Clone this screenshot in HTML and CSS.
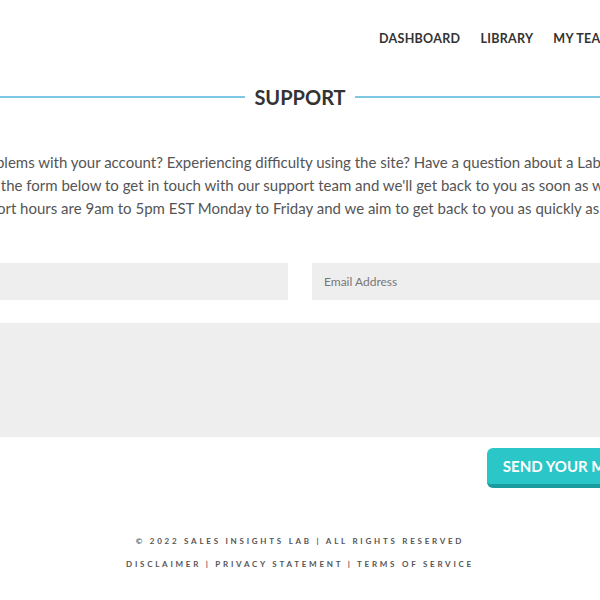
FILE: index.html
```html
<!DOCTYPE html>
<html lang="en">
<head>
    <meta charset="UTF-8">
    <meta name="viewport" content="width=device-width, initial-scale=1.0">
    <title>Support - Sales Insights Lab</title>
    <link rel="stylesheet" href="styles.css">
</head>
<body>

<div class="page">
    <div class="container">
        <header class="site-header">
            <nav class="main-nav">
                <a href="#">Dashboard</a>
                <a href="#">Library</a>
                <a href="#">My Team</a>
                <a href="#">Logout</a>
            </nav>
        </header>

        <h1 class="section-title"><span>Support</span></h1>

        <p class="intro">
            <span class="line">Having problems with your account? Experiencing difficulty using the site? Have a question about a Lab report?</span>
            <span class="line line-2">Please use the form below to get in touch with our support team and we'll get back to you as soon as we can.</span>
            <span class="line line-3">Our support hours are 9am to 5pm EST Monday to Friday and we aim to get back to you as quickly as possible.</span>
        </p>

        <form class="support-form">
            <div class="form-row">
                <input type="text" placeholder="Name">
                <input type="email" placeholder="Email Address">
            </div>
            <textarea placeholder="Message"></textarea>
            <div class="form-actions">
                <button type="button">Send Your Message</button>
            </div>
        </form>

        <footer class="site-footer">
            <p>&copy; 2022 Sales Insights Lab | All Rights Reserved</p>
            <p>Disclaimer | Privacy Statement | Terms of Service</p>
        </footer>
    </div>
</div>

</body>
</html>
```

FILE: styles.css
```css
body {
    margin: 0;
    background-color: #ffffff;
    color: #555;
    font-family: 'Lato', 'Open Sans', sans-serif;
    overflow: hidden;
}

.page {
    display: flex;
    justify-content: center;
}

.container {
    width: 752px;
    flex-shrink: 0;
}

.site-header {
    padding: 30px 0 0 455px;
    height: 40px;
}

.main-nav {
    display: flex;
    gap: 20px;
    white-space: nowrap;
}

.main-nav a {
    color: #333;
    text-decoration: none;
    text-transform: uppercase;
    font-size: 12.5px;
    font-weight: bold;
    letter-spacing: 0.3px;
    line-height: 17px;
}

.section-title {
    display: flex;
    align-items: center;
    gap: 9px;
    margin: 17px -200px 0;
    font-size: 20px;
    line-height: 20px;
    font-weight: bold;
    color: #333;
    text-transform: uppercase;
}

.section-title::before,
.section-title::after {
    content: "";
    flex: 1;
    height: 2px;
    background-color: #7ec8e6;
}

.intro {
    margin: 44px 0 0;
    font-size: 15px;
    line-height: 23px;
    white-space: nowrap;
}

.intro .line {
    display: block;
}

.intro .line-2 {
    padding-left: 4px;
}

.intro .line-3 {
    padding-left: 12px;
}

.support-form {
    margin-top: 43px;
}

.form-row {
    display: flex;
    gap: 24px;
}

.support-form input,
.support-form textarea {
    display: block;
    box-sizing: border-box;
    border: none;
    background-color: #eeeeee;
    font-family: inherit;
    font-size: 12px;
    color: #555;
    padding: 0 12px;
}

.support-form input {
    flex: 1;
    height: 37px;
}

.support-form textarea {
    width: 100%;
    height: 114px;
    margin-top: 23px;
    padding-top: 12px;
    resize: none;
}

.support-form ::placeholder {
    color: #777;
}

.form-actions {
    display: flex;
    justify-content: flex-end;
    margin-top: 11px;
}

.form-actions button {
    background-color: #2ac6c8;
    color: #fff;
    border: none;
    border-bottom: 4px solid #1a9c9e;
    border-radius: 6px;
    height: 40px;
    padding: 0 16px;
    font-family: inherit;
    font-size: 15px;
    font-weight: bold;
    text-transform: uppercase;
    cursor: pointer;
}

.site-footer {
    margin-top: 47px;
    text-align: center;
}

.site-footer p {
    margin: 0 0 11px;
    font-size: 8px;
    line-height: 12px;
    font-weight: bold;
    letter-spacing: 2.75px;
    text-transform: uppercase;
    color: #555;
}
```
